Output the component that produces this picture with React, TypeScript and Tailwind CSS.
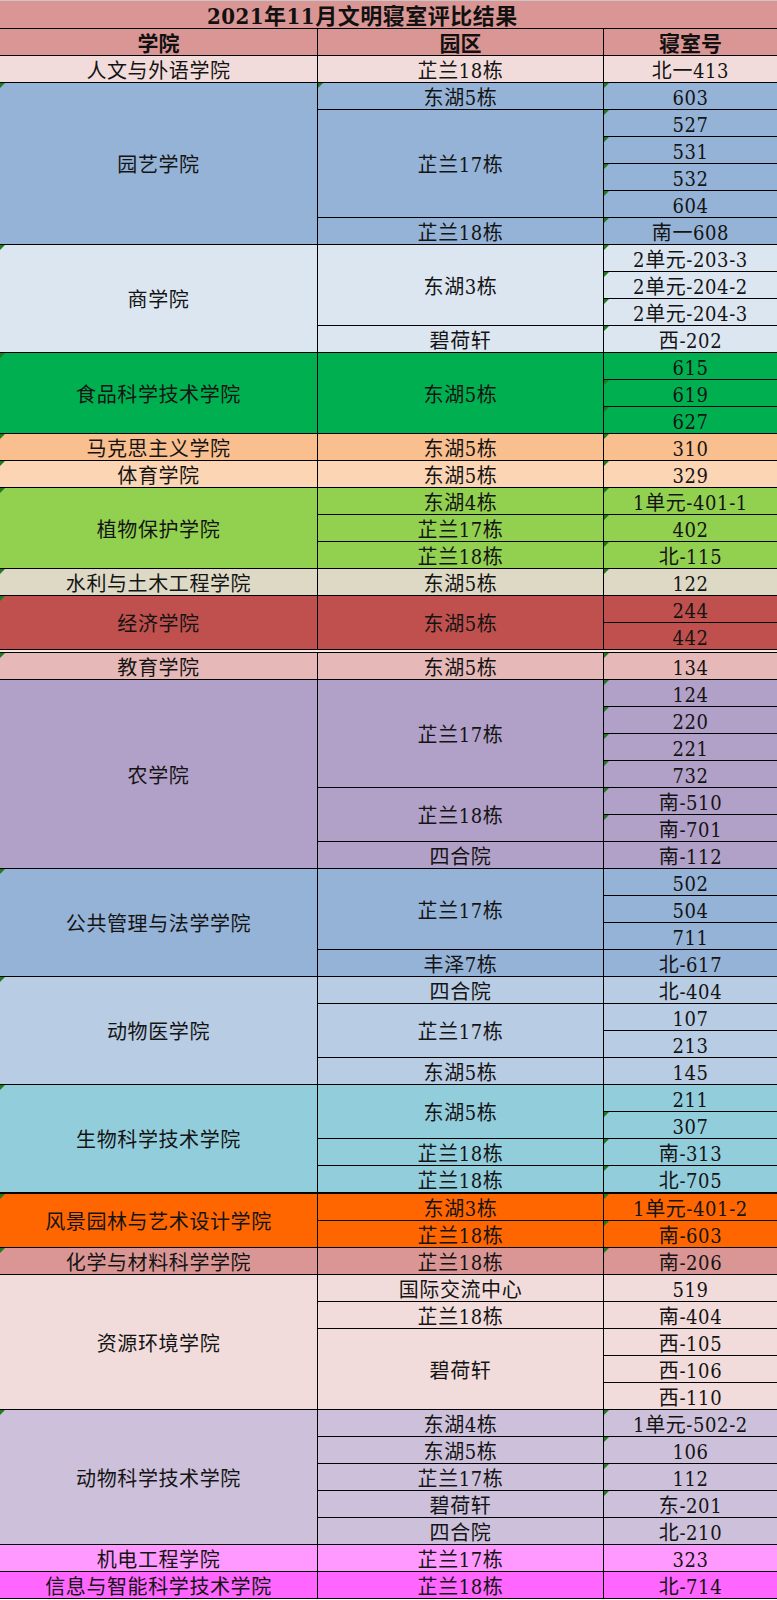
import React from "react";

type Room = { t: string; g?: boolean; gray?: boolean };
type Sub = { p: string; g?: boolean; rooms: Room[] };
type Group = { name: string; bg: string; g?: boolean; subs: Sub[]; after?: "double" | "thick" };

const groups: Group[] = [
  { name: "人文与外语学院", bg: "bg-[#f2dcdb]", subs: [{ p: "芷兰18栋", rooms: [{ t: "北一413" }] }] },
  {
    name: "园艺学院",
    bg: "bg-[#95b3d7]",
    g: true,
    subs: [
      { p: "东湖5栋", g: true, rooms: [{ t: "603", g: true }] },
      { p: "芷兰17栋", rooms: [{ t: "527", g: true, gray: true }, { t: "531", g: true }, { t: "532", g: true }, { t: "604", g: true }] },
      { p: "芷兰18栋", rooms: [{ t: "南一608", g: true }] },
    ],
  },
  {
    name: "商学院",
    bg: "bg-[#dce6f1]",
    g: true,
    subs: [
      { p: "东湖3栋", rooms: [{ t: "2单元-203-3", g: true }, { t: "2单元-204-2", g: true }, { t: "2单元-204-3", g: true }] },
      { p: "碧荷轩", rooms: [{ t: "西-202", g: true }] },
    ],
  },
  {
    name: "食品科学技术学院",
    bg: "bg-[#00b050]",
    g: true,
    subs: [{ p: "东湖5栋", rooms: [{ t: "615" }, { t: "619", g: true }, { t: "627", g: true }] }],
  },
  { name: "马克思主义学院", bg: "bg-[#fabf8f]", g: true, subs: [{ p: "东湖5栋", rooms: [{ t: "310", g: true }] }] },
  { name: "体育学院", bg: "bg-[#fcd5b4]", g: true, subs: [{ p: "东湖5栋", rooms: [{ t: "329", g: true }] }] },
  {
    name: "植物保护学院",
    bg: "bg-[#92d050]",
    g: true,
    subs: [
      { p: "东湖4栋", rooms: [{ t: "1单元-401-1", g: true }] },
      { p: "芷兰17栋", rooms: [{ t: "402", g: true }] },
      { p: "芷兰18栋", rooms: [{ t: "北-115", g: true }] },
    ],
  },
  { name: "水利与土木工程学院", bg: "bg-[#ddd9c4]", g: true, subs: [{ p: "东湖5栋", rooms: [{ t: "122", g: true }] }] },
  {
    name: "经济学院",
    bg: "bg-[#c0504d]",
    g: true,
    after: "double",
    subs: [{ p: "东湖5栋", rooms: [{ t: "244" }, { t: "442" }] }],
  },
  { name: "教育学院", bg: "bg-[#e6b8b7]", g: true, subs: [{ p: "东湖5栋", rooms: [{ t: "134", g: true }] }] },
  {
    name: "农学院",
    bg: "bg-[#b1a0c7]",
    subs: [
      { p: "芷兰17栋", rooms: [{ t: "124", g: true }, { t: "220", g: true }, { t: "221", g: true }, { t: "732", g: true }] },
      { p: "芷兰18栋", rooms: [{ t: "南-510", g: true }, { t: "南-701", g: true }] },
      { p: "四合院", rooms: [{ t: "南-112" }] },
    ],
  },
  {
    name: "公共管理与法学学院",
    bg: "bg-[#95b3d7]",
    g: true,
    subs: [
      { p: "芷兰17栋", rooms: [{ t: "502" }, { t: "504" }, { t: "711" }] },
      { p: "丰泽7栋", rooms: [{ t: "北-617" }] },
    ],
  },
  {
    name: "动物医学院",
    bg: "bg-[#b8cce4]",
    g: true,
    subs: [
      { p: "四合院", rooms: [{ t: "北-404" }] },
      { p: "芷兰17栋", rooms: [{ t: "107" }, { t: "213" }] },
      { p: "东湖5栋", rooms: [{ t: "145" }] },
    ],
  },
  {
    name: "生物科学技术学院",
    bg: "bg-[#92cddc]",
    g: true,
    after: "thick",
    subs: [
      { p: "东湖5栋", rooms: [{ t: "211" }, { t: "307", g: true }] },
      { p: "芷兰18栋", rooms: [{ t: "南-313", g: true }] },
      { p: "芷兰18栋", rooms: [{ t: "北-705", g: true }] },
    ],
  },
  {
    name: "风景园林与艺术设计学院",
    bg: "bg-[#ff6600]",
    g: true,
    subs: [
      { p: "东湖3栋", rooms: [{ t: "1单元-401-2", g: true }] },
      { p: "芷兰18栋", rooms: [{ t: "南-603", g: true }] },
    ],
  },
  { name: "化学与材料科学学院", bg: "bg-[#da9694]", g: true, subs: [{ p: "芷兰18栋", rooms: [{ t: "南-206", g: true }] }] },
  {
    name: "资源环境学院",
    bg: "bg-[#f2dcdb]",
    subs: [
      { p: "国际交流中心", rooms: [{ t: "519" }] },
      { p: "芷兰18栋", rooms: [{ t: "南-404" }] },
      { p: "碧荷轩", rooms: [{ t: "西-105" }, { t: "西-106" }, { t: "西-110" }] },
    ],
  },
  {
    name: "动物科学技术学院",
    bg: "bg-[#ccc0da]",
    g: true,
    subs: [
      { p: "东湖4栋", rooms: [{ t: "1单元-502-2", g: true }] },
      { p: "东湖5栋", rooms: [{ t: "106", g: true }] },
      { p: "芷兰17栋", rooms: [{ t: "112", g: true }] },
      { p: "碧荷轩", rooms: [{ t: "东-201", g: true }] },
      { p: "四合院", rooms: [{ t: "北-210" }] },
    ],
  },
  { name: "机电工程学院", bg: "bg-[#ff99ff]", subs: [{ p: "芷兰17栋", rooms: [{ t: "323" }] }] },
  { name: "信息与智能科学技术学院", bg: "bg-[#ff66ff]", subs: [{ p: "芷兰18栋", rooms: [{ t: "北-714" }] }] },
];

const Tri = () => (
  <span className="absolute left-0 top-0 h-0 w-0 border-r-[5px] border-t-[5px] border-r-transparent border-t-[#1e7b1e]" />
);

const txt = "text-[20px] tracking-[0.6px] text-[#141414] leading-none pt-[3px]";

export default function App() {
  return (
    <div
      className="w-[777px] bg-white"
      style={{ fontFamily: '"DejaVu Serif Condensed", "Liberation Serif", "Noto Sans CJK SC", serif' }}
    >
      <div className="flex h-[29px] items-center justify-start border-b border-t border-b-black border-t-[#c8c8c8] bg-[#da9694] pl-[207px] pt-[2px] text-[22px] font-bold leading-none tracking-[0.5px] text-[#111]">
        2021年11月文明寝室评比结果
      </div>
      <div className="flex h-[27px] border-b border-black bg-[#da9694] text-[21px] font-bold leading-none text-[#111]">
        <div className="flex w-[318px] items-center justify-center border-r border-black pt-[3px]">学院</div>
        <div className="flex w-[286px] items-center justify-center border-r border-black pt-[3px]">园区</div>
        <div className="flex flex-1 items-center justify-center pt-[3px]">寝室号</div>
      </div>
      {groups.map((gr, gi) => (
        <React.Fragment key={gi}>
          <div className={`flex ${gr.bg}`}>
            <div className={`relative flex w-[318px] items-center justify-center border-b border-r border-black ${txt}`}>
              {gr.g && <Tri />}
              {gr.name}
            </div>
            <div className="flex w-[459px] flex-col">
              {gr.subs.map((s, si) => (
                <div key={si} className="flex">
                  <div className={`relative flex w-[286px] items-center justify-center border-b border-r border-black ${txt}`}>
                    {s.g && <Tri />}
                    {s.p}
                  </div>
                  <div className="flex flex-1 flex-col">
                    {s.rooms.map((r, ri) => (
                      <div
                        key={ri}
                        className={`relative flex h-[27px] items-center justify-center border-b border-black ${txt} ${r.gray ? "text-[#555]" : ""}`}
                      >
                        {r.g && <Tri />}
                        {r.t}
                      </div>
                    ))}
                  </div>
                </div>
              ))}
            </div>
          </div>
          {gr.after === "double" && <div className="h-[3px] border-b border-black bg-[#f4e4e4]" />}
          {gr.after === "thick" && <div className="h-[1px] bg-black" />}
        </React.Fragment>
      ))}
    </div>
  );
}
